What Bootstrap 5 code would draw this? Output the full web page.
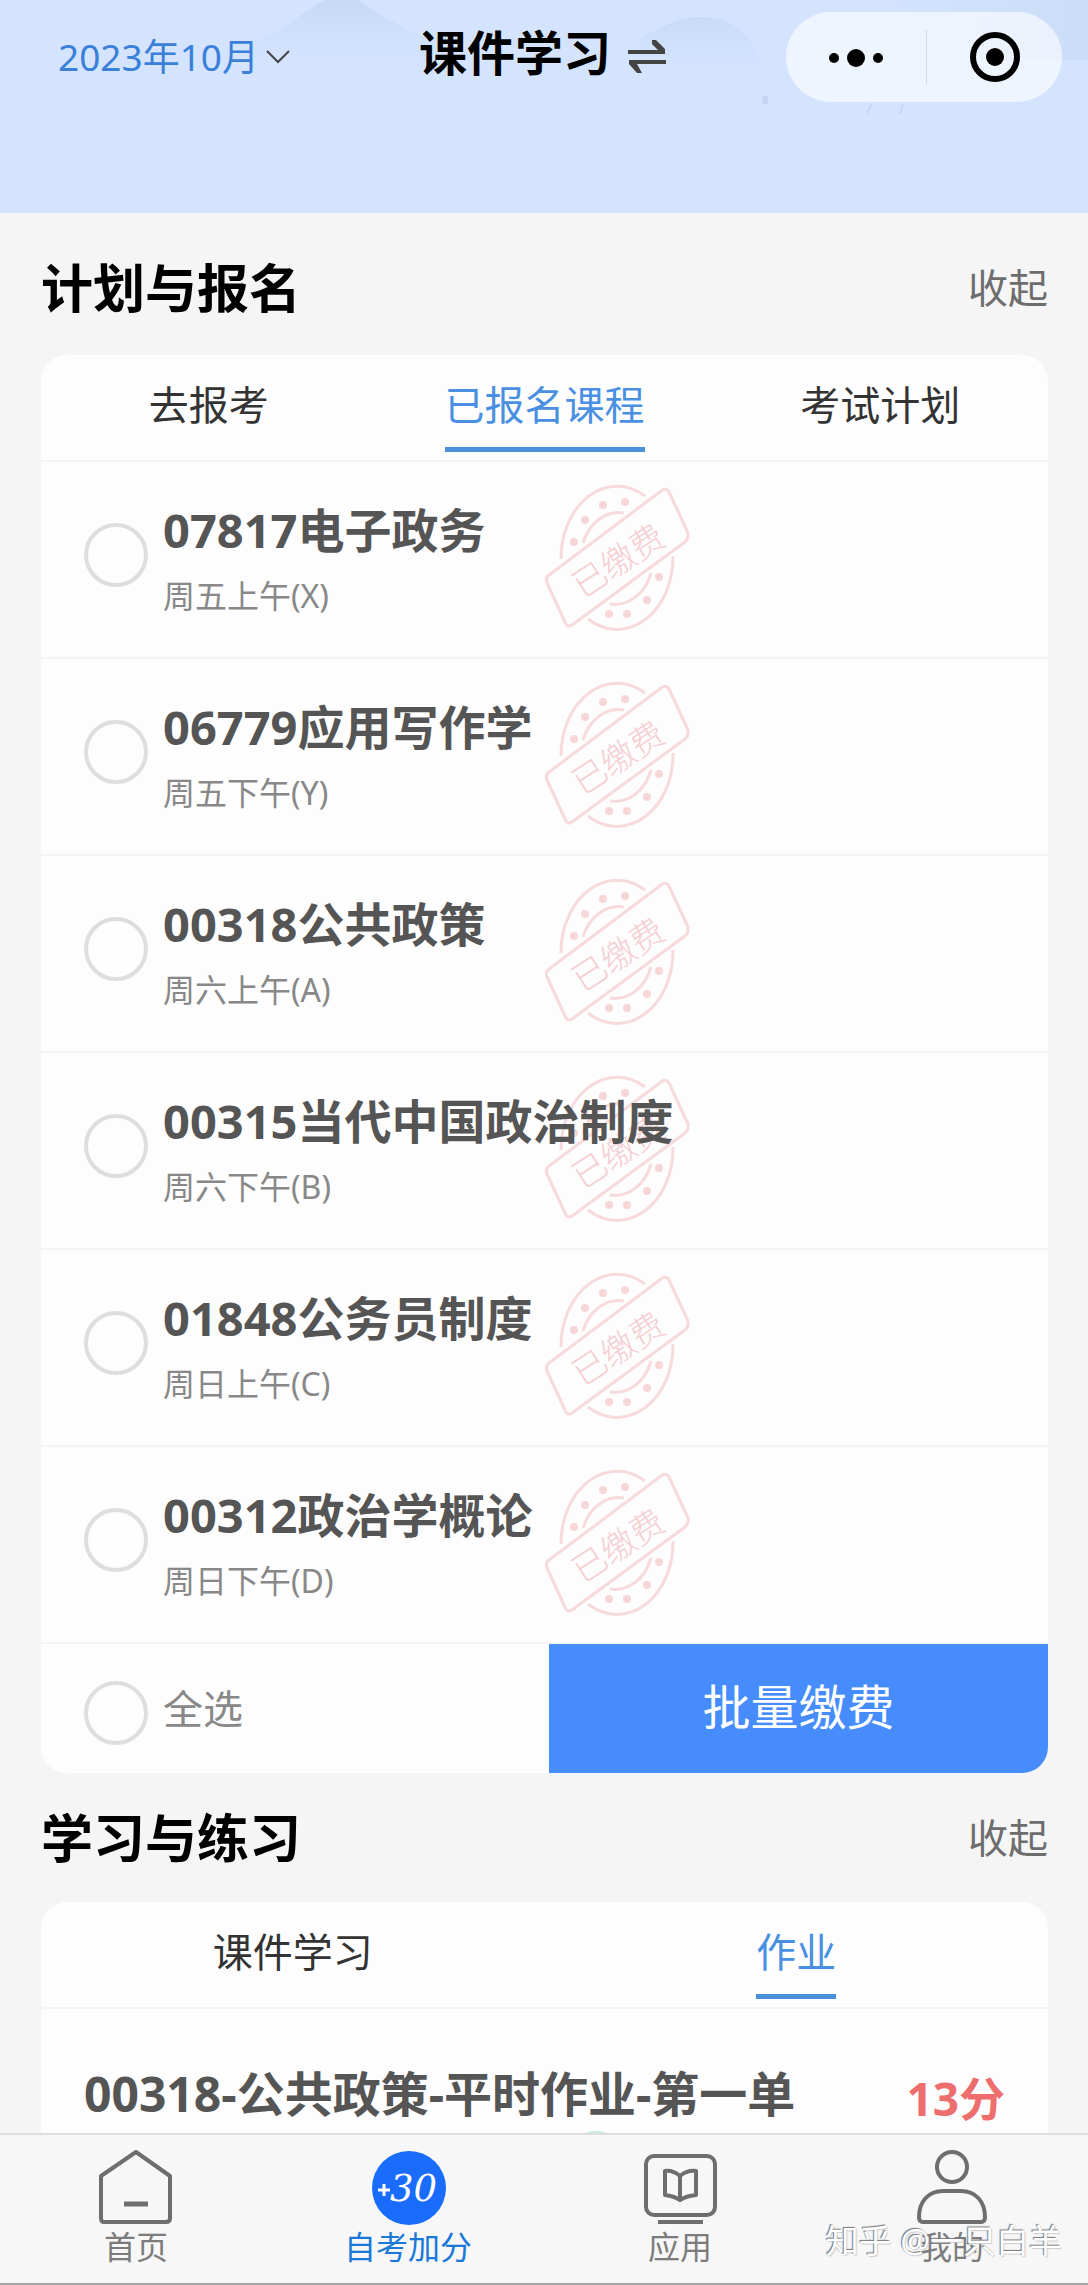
<!DOCTYPE html>
<html lang="zh-CN">
<head>
<meta charset="utf-8">
<meta name="viewport" content="width=device-width, initial-scale=1">
<title>课件学习</title>
<link href="https://cdn.jsdelivr.net/npm/bootstrap@5.3.0/dist/css/bootstrap.min.css" rel="stylesheet">
<style>
  body { font-family: "Noto Sans", "Noto Sans CJK SC", sans-serif; background: #f5f5f5; color: #333; }
  .app-head { height: 213px; background: #d4e4fe; }
  .head-scene { top: 0; left: 0; width: 100%; height: 100%; }
  .head-bar { height: 114px; padding: 12px 26px 12px 58px; }
  .term-select { appearance: none; border: 0; background: transparent; color: #3a80d8; font-size: 37px; line-height: 48px; padding: 0; width: 206px; }
  .page-title { font-size: 48px; line-height: 56px; font-weight: 700; color: #000; margin: 0 0 8px; }
  .capsule { width: 276px; height: 90px; border-radius: 45px; background: rgba(255,255,255,.62); }
  .capsule button { background: none; border: 0; padding: 0; }
  .capsule-rule { width: 1px; height: 54px; background: #d3dae6; }
  .page-body { padding: 0 40px 0 41px; }
  .sec-head { height: 142px; padding-top: 8px; }
  .sec-head.sec-second { height: 129px; padding-top: 0; }
  .sec-title { font-size: 52px; line-height: 64px; font-weight: 700; color: #000; margin: 0; }
  .fold-btn { font-size: 40px; line-height: 48px; color: #6d6d6d; background: none; border: 0; padding: 0; }
  .panel { background: #fdfdfd; border-radius: 26px; overflow: hidden; }
  .tab-row { height: 107px; border-bottom: 2px solid #f4f4f4; padding: 0 0 8px; }
  .tab-row .nav-link { font-size: 40px; line-height: 60px; color: #333; padding: 20px 0 12px; border-bottom: 5px solid transparent; }
  .tab-row .nav-link.active { color: #4a90e2; border-color: #4a90d9; }
  .course { height: 197px; padding: 32px 43px 0; border-bottom: 2px solid #f4f4f4; gap: 15px; }
  .course-name { font-size: 47px; line-height: 72px; font-weight: 700; color: #555; }
  .course-time { font-size: 32px; line-height: 60px; color: #888; }
  .pick { appearance: none; width: 64px; height: 64px; border: 4px solid #dedede; border-radius: 50%; flex: none; margin: 29px 0 0; background: transparent; }
  .stamp { left: 500px; top: 20px; width: 152px; height: 152px; }
  .pay-row { height: 129px; }
  .pay-row .pick { margin: 8px 0 0; }
  .all-label { font-size: 40px; line-height: 48px; color: #888; padding-left: 43px; gap: 15px; }
  .pay-btn { background: #468cfc; color: #fff; font-size: 48px; line-height: 56px; border: 0; width: 499px; padding: 0 0 4px; }
  .work { padding: 54px 43px 0; }
  .work-name { font-size: 48px; line-height: 62px; font-weight: 700; color: #555; width: 740px; }
  .work-score { font-size: 46px; line-height: 70px; font-weight: 700; color: #ee6e6e; }
  .work-dot { left: 525px; top: 122px; width: 60px; height: 60px; border-radius: 50%; background: #c8e9dd; }
  .tabbar { height: 152px; background: #f7f7f7; border-top: 2px solid #dedede; border-bottom: 2px solid #a5a5a5; }
  .tabbar a { color: #7c7c7c; font-size: 32px; line-height: 40px; text-decoration: none; padding-top: 12px; }
  .tabbar a.active { color: #1a78d8; }
  .tabbar svg { width: 80px; height: 80px; }
  .credit { right: 26px; bottom: 18px; font-size: 33px; line-height: 48px; color: #fff; text-shadow: -1px -1px 1px #777, 1px 1px 1px #ccc; }
</style>
</head>
<body>
<div class="vh-100 d-flex flex-column overflow-hidden">
  <header class="app-head position-relative flex-shrink-0">
    <svg class="head-scene position-absolute" viewBox="0 0 1088 213" preserveAspectRatio="none" aria-hidden="true">
      <defs>
        <linearGradient id="hill" x1="0" y1="0" x2="0" y2="1"><stop offset="0" stop-color="#bfd3f1"/><stop offset="1" stop-color="#d4e4fe" stop-opacity="0"/></linearGradient>
        <linearGradient id="haze" x1="0" y1="0" x2="1" y2="0"><stop offset="0" stop-color="#c3d6f2" stop-opacity="0"/><stop offset="1" stop-color="#c3d6f2"/></linearGradient>
      </defs>
      <path d="M245 50C285 30 305 10 325 0H358C378 14 395 24 430 40V80H245Z" fill="url(#hill)" opacity=".7"/>
      <path d="M640 38C670 22 685 16 705 17C745 20 752 45 768 70V80H640Z" fill="url(#hill)" opacity=".6"/>
      <path d="M860 0H1088V60H860Z" fill="url(#haze)" opacity=".5"/>
      <path d="M763 97h4v6h-4zM872 104l-5 9M903 104l-3 10" stroke="#c6d6f0" stroke-width="2" fill="#c0d0ec"/>
    </svg>
    <div class="head-bar position-relative d-flex align-items-center justify-content-between">
      <label class="d-flex align-items-center">
        <select class="term-select" aria-label="考期"><option>2023年10月</option></select>
        <svg width="28" height="20" viewBox="0 0 28 20" fill="none" stroke="#444" stroke-width="2"><path d="M3 4l11 11L25 4"/></svg>
      </label>
      <div class="d-flex align-items-center gap-3 ps-2">
        <h1 class="page-title">课件学习</h1>
        <svg width="40" height="36" viewBox="0 0 40 36" fill="#444" aria-hidden="true"><path d="M1 11H31L25 5V1H29L38 10V15H1ZM39 21V25H10L15 34H10L2 25V21Z"/></svg>
      </div>
      <div class="capsule d-flex align-items-center">
        <button class="flex-fill" aria-label="更多"><svg width="60" height="24" viewBox="0 0 60 24"><circle cx="8" cy="12" r="5"/><circle cx="30" cy="12" r="9"/><circle cx="52" cy="12" r="5"/></svg></button>
        <span class="capsule-rule"></span>
        <button class="flex-fill" aria-label="关闭"><svg width="54" height="54" viewBox="0 0 54 54"><circle cx="27" cy="27" r="22" fill="none" stroke="#000" stroke-width="6"/><circle cx="27" cy="27" r="9"/></svg></button>
      </div>
    </div>
  </header>

  <main class="page-body flex-fill overflow-hidden">
    <div class="sec-head d-flex align-items-center justify-content-between">
      <h2 class="sec-title">计划与报名</h2><button class="fold-btn">收起</button>
    </div>
    <section class="panel">
      <nav class="tab-row nav nav-fill">
        <div class="col d-flex justify-content-center"><a class="nav-link" href="#">去报考</a></div>
        <div class="col d-flex justify-content-center"><a class="nav-link active" href="#">已报名课程</a></div>
        <div class="col d-flex justify-content-center"><a class="nav-link" href="#">考试计划</a></div>
      </nav>
      <svg class="d-none" aria-hidden="true">
        <symbol id="paid" viewBox="0 0 152 152">
          <g fill="none" stroke="#f7dadb" stroke-width="3">
            <path d="M20 77A56 72 0 0 1 104 14M132 74A56 72 0 0 1 47 137"/>
            <path d="M42 61A38 46 0 0 1 83 31M110 91A38 46 0 0 1 69 122"/>
            <path d="M8 93L120 9Q125 5 128 10L147 51Q148 57 144 60L31 143Q26 146 24 140L6 101Q4 96 8 93Z" stroke-linejoin="round"/>
          </g>
          <g fill="#f7d6d8"><circle cx="33" cy="60" r="4"/><circle cx="44" cy="38" r="4"/><circle cx="62" cy="23" r="4"/><circle cx="84" cy="20" r="4"/><circle cx="118" cy="95" r="4"/><circle cx="106" cy="118" r="4"/><circle cx="86" cy="132" r="4"/><circle cx="68" cy="132" r="4"/></g>
          <text x="77" y="91" text-anchor="middle" font-size="34" font-weight="300" fill="#f5ced1" transform="rotate(-33 77 78)">已缴费</text>
        </symbol>
      </svg>
      <label class="course d-flex position-relative"><svg class="stamp position-absolute"><use href="#paid"/></svg><input class="pick" type="checkbox"><span class="position-relative"><span class="course-name d-block">07817电子政务</span><span class="course-time d-block">周五上午(X)</span></span></label>
      <label class="course d-flex position-relative"><svg class="stamp position-absolute"><use href="#paid"/></svg><input class="pick" type="checkbox"><span class="position-relative"><span class="course-name d-block">06779应用写作学</span><span class="course-time d-block">周五下午(Y)</span></span></label>
      <label class="course d-flex position-relative"><svg class="stamp position-absolute"><use href="#paid"/></svg><input class="pick" type="checkbox"><span class="position-relative"><span class="course-name d-block">00318公共政策</span><span class="course-time d-block">周六上午(A)</span></span></label>
      <label class="course d-flex position-relative"><svg class="stamp position-absolute"><use href="#paid"/></svg><input class="pick" type="checkbox"><span class="position-relative"><span class="course-name d-block">00315当代中国政治制度</span><span class="course-time d-block">周六下午(B)</span></span></label>
      <label class="course d-flex position-relative"><svg class="stamp position-absolute"><use href="#paid"/></svg><input class="pick" type="checkbox"><span class="position-relative"><span class="course-name d-block">01848公务员制度</span><span class="course-time d-block">周日上午(C)</span></span></label>
      <label class="course d-flex position-relative"><svg class="stamp position-absolute"><use href="#paid"/></svg><input class="pick" type="checkbox"><span class="position-relative"><span class="course-name d-block">00312政治学概论</span><span class="course-time d-block">周日下午(D)</span></span></label>
      <div class="pay-row d-flex justify-content-between">
        <label class="all-label d-flex align-items-center"><input class="pick" type="checkbox"><span>全选</span></label>
        <button class="pay-btn">批量缴费</button>
      </div>
    </section>

    <div class="sec-head sec-second d-flex align-items-center justify-content-between">
      <h2 class="sec-title">学习与练习</h2><button class="fold-btn">收起</button>
    </div>
    <section class="panel">
      <nav class="tab-row nav nav-fill">
        <div class="col d-flex justify-content-center"><a class="nav-link" href="#">课件学习</a></div>
        <div class="col d-flex justify-content-center"><a class="nav-link active" href="#">作业</a></div>
      </nav>
      <div class="work position-relative d-flex justify-content-between align-items-start">
        <span class="work-dot position-absolute"></span>
        <div class="work-name">00318-公共政策-平时作业-第一单元</div>
        <div class="work-score">13分</div>
      </div>
    </section>
  </main>

  <nav class="tabbar position-relative d-flex flex-shrink-0">
    <a class="col d-flex flex-column align-items-center" href="#"><svg viewBox="0 0 80 80" fill="none" stroke="#6e6e6e" stroke-width="4" stroke-linejoin="round"><path d="M40 5L74 29V71Q74 75 70 75H8Q5 75 5 71V29Z"/><path d="M28 57H52" stroke-width="5"/></svg>首页</a>
    <a class="col d-flex flex-column align-items-center active" href="#"><svg viewBox="0 0 80 80"><circle cx="41" cy="41" r="37" fill="#1a6dfc"/><path d="M10 43H22M16 37V49" stroke="#fff" stroke-width="3"/><text x="22" y="54" font-family="DejaVu Serif, serif" font-style="italic" font-size="37" fill="#fff">30</text></svg>自考加分</a>
    <a class="col d-flex flex-column align-items-center" href="#"><svg viewBox="0 0 80 80" fill="none" stroke="#6e6e6e" stroke-width="4" stroke-linejoin="round"><rect x="6" y="9" width="69" height="59" rx="8"/><path d="M18 75H63" stroke-width="4"/><path d="M40 29Q33 23 25 24V48Q34 49 40 53Q46 49 56 48V24Q47 23 40 29V52"/></svg>应用</a>
    <a class="col d-flex flex-column align-items-center" href="#"><svg viewBox="0 0 80 80" fill="none" stroke="#6e6e6e" stroke-width="4" stroke-linejoin="round"><circle cx="40" cy="20" r="15"/><path d="M7 70C7 54 17 44 31 44H49C63 44 73 54 73 70Q73 75 69 75H11Q7 75 7 70Z"/></svg>我的</a>
    <span class="credit position-absolute">知乎 @一只白羊</span>
  </nav>
</div>
<script src="https://cdn.jsdelivr.net/npm/bootstrap@5.3.0/dist/js/bootstrap.bundle.min.js"></script>
</body>
</html>
